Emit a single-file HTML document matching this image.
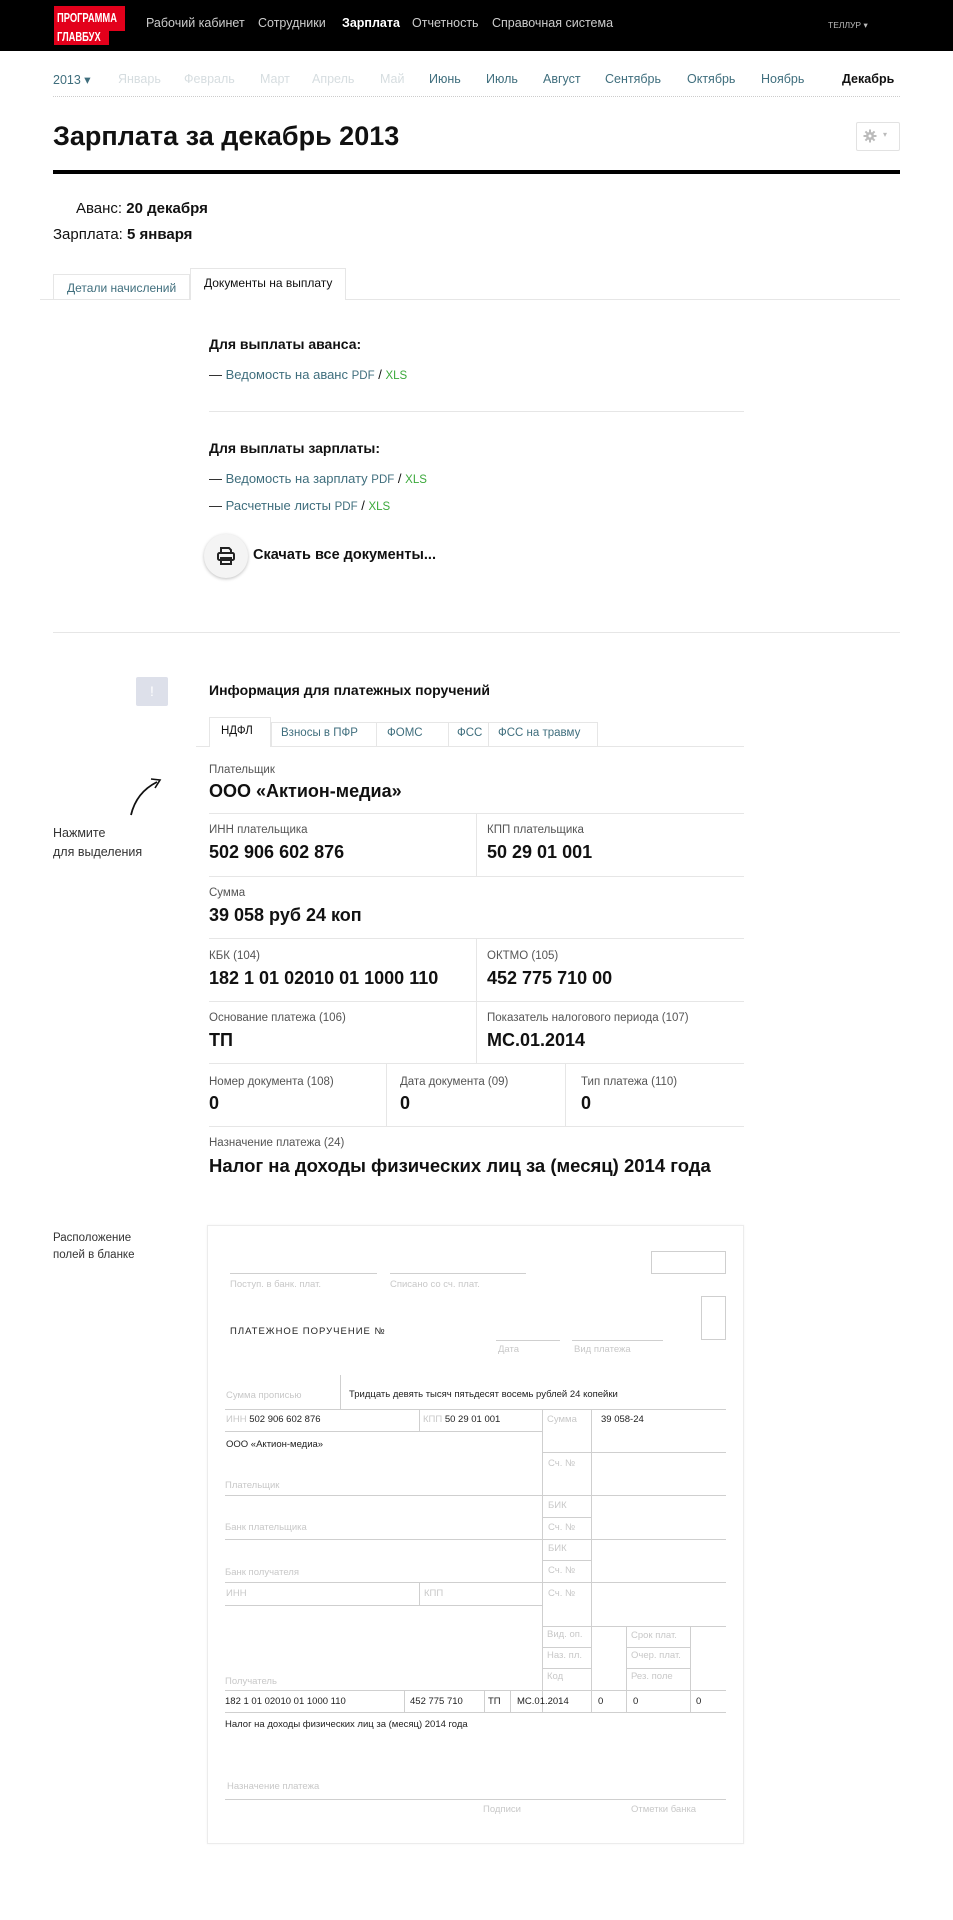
<!DOCTYPE html>
<html><head><meta charset="utf-8">
<style>
*{margin:0;padding:0;box-sizing:border-box}
body{width:953px;height:1920px;background:#fff;position:relative;font-family:"Liberation Sans","Noto Sans CJK SC",sans-serif;color:#111;overflow:hidden}
.a{position:absolute;white-space:nowrap}
.hd{position:absolute;left:0;top:0;width:953px;height:51px;background:#000}
.nav{color:#ccc;font-size:12.5px;top:16px}
.mo{font-size:12.5px;top:72px;color:#3f6e7d}
.mo.l{color:#d6dde0}
.hl{position:absolute;background:#e6e6e6;height:1px}
.vl{position:absolute;background:#e6e6e6;width:1px}
.lb{font-size:11.5px;color:#555}
.vv{font-size:18px;font-weight:bold;color:#111}
.lk{font-size:13px;color:#3f6e7d}
.x{color:#3aa83a}
.g{font-size:9.5px;color:#c8c8c8}
.f{font-size:9.5px;color:#222}
.fl{position:absolute;background:#cfcfcf;height:1px}
.fv{position:absolute;background:#cfcfcf;width:1px}
</style></head><body>
<div class="hd"></div>
<div class="a" style="left:54px;top:6px;width:71px;height:25px;background:#e3001b"></div>
<div class="a" style="left:54px;top:30px;width:55px;height:15px;background:#e3001b"></div>
<div class="a" style="left:57px;top:9px;color:#fff;font-size:12px;font-weight:bold;line-height:17px;transform:scale(0.78,1.1);transform-origin:left top">ПРОГРАММА<br>ГЛАВБУХ</div>
<div class="a nav" style="left:146px">Рабочий кабинет</div>
<div class="a nav" style="left:258px">Сотрудники</div>
<div class="a nav" style="left:342px;color:#fff;font-weight:bold">Зарплата</div>
<div class="a nav" style="left:412px">Отчетность</div>
<div class="a nav" style="left:492px">Справочная система</div>
<div class="a" style="left:828px;top:20px;color:#bbb;font-size:8.5px">ТЕЛЛУР ▾</div>

<div class="a mo" style="left:53px">2013 ▾</div>
<div class="a mo l" style="left:118px">Январь</div>
<div class="a mo l" style="left:184px">Февраль</div>
<div class="a mo l" style="left:260px">Март</div>
<div class="a mo l" style="left:312px">Апрель</div>
<div class="a mo l" style="left:380px">Май</div>
<div class="a mo" style="left:429px">Июнь</div>
<div class="a mo" style="left:486px">Июль</div>
<div class="a mo" style="left:543px">Август</div>
<div class="a mo" style="left:605px">Сентябрь</div>
<div class="a mo" style="left:687px">Октябрь</div>
<div class="a mo" style="left:761px">Ноябрь</div>
<div class="a mo" style="left:842px;color:#111;font-weight:bold">Декабрь</div>
<div class="a" style="left:53px;top:96px;width:847px;border-top:1px dotted #ccc"></div>

<div class="a" style="left:53px;top:121px;font-size:27px;font-weight:bold">Зарплата за декабрь 2013</div>
<div class="a" style="left:856px;top:122px;width:44px;height:29px;border:1px solid #e2e2e2;border-radius:2px"></div>
<svg class="a" style="left:863px;top:129px" width="14" height="14" viewBox="0 0 14 14"><g fill="#bbb"><circle cx="7" cy="7" r="4"/><rect x="6" y="0.5" width="2" height="13"/><rect x="0.5" y="6" width="13" height="2"/><rect x="6" y="0.5" width="2" height="13" transform="rotate(45 7 7)"/><rect x="6" y="0.5" width="2" height="13" transform="rotate(-45 7 7)"/></g><circle cx="7" cy="7" r="1.5" fill="#fff"/></svg>
<div class="a" style="left:883px;top:130px;color:#bbb;font-size:8px">▾</div>
<div class="a" style="left:53px;top:170px;width:847px;height:4px;background:#000"></div>

<div class="a" style="left:76px;top:200px;font-size:15px">Аванс: <b>20 декабря</b></div>
<div class="a" style="left:53px;top:226px;font-size:15px">Зарплата: <b>5 января</b></div>

<div class="a" style="left:53px;top:274px;width:137px;height:26px;border:1px solid #e6e6e6;border-bottom:none"></div>
<div class="a" style="left:67px;top:281px;font-size:12px;color:#3f6e7d">Детали начислений</div>
<div class="a" style="left:190px;top:268px;width:156px;height:32px;border:1px solid #e6e6e6;border-bottom:none;background:#fff"></div>
<div class="a" style="left:204px;top:276px;font-size:12px">Документы на выплату</div>
<div class="hl" style="left:40px;top:299px;width:150px"></div>
<div class="hl" style="left:346px;top:299px;width:554px"></div>

<div class="a" style="left:209px;top:336px;font-size:14px;font-weight:bold">Для выплаты аванса:</div>
<div class="a lk" style="left:209px;top:367px"><span style="color:#111">— </span>Ведомость на аванс <span style="font-size:11.5px">PDF</span> <span style="color:#111">/</span> <span class="x" style="font-size:11.5px">XLS</span></div>
<div class="hl" style="left:209px;top:411px;width:535px"></div>
<div class="a" style="left:209px;top:440px;font-size:14px;font-weight:bold">Для выплаты зарплаты:</div>
<div class="a lk" style="left:209px;top:471px"><span style="color:#111">— </span>Ведомость на зарплату <span style="font-size:11.5px">PDF</span> <span style="color:#111">/</span> <span class="x" style="font-size:11.5px">XLS</span></div>
<div class="a lk" style="left:209px;top:498px"><span style="color:#111">— </span>Расчетные листы <span style="font-size:11.5px">PDF</span> <span style="color:#111">/</span> <span class="x" style="font-size:11.5px">XLS</span></div>
<div class="a" style="left:204px;top:534px;width:44px;height:44px;border-radius:50%;background:#f4f4f4;box-shadow:0 1px 3px rgba(0,0,0,.25)"></div>
<svg class="a" style="left:216px;top:546px" width="20" height="20" viewBox="0 0 20 20" fill="none" stroke="#222" stroke-width="2"><path d="M5 7V2h8l2 2v3"/><rect x="2" y="7" width="16" height="7" rx="1.5"/><rect x="5" y="12" width="10" height="6"/></svg>
<div class="a" style="left:253px;top:547px;font-size:14.5px;font-weight:bold">Скачать все документы...</div>

<div class="hl" style="left:53px;top:632px;width:847px"></div>

<div class="a" style="left:136px;top:677px;width:32px;height:29px;background:#dde0ea;border-radius:2px;color:#fff;font-size:14px;text-align:center;line-height:29px">!</div>
<div class="a" style="left:209px;top:682px;font-size:14px;font-weight:bold">Информация для платежных поручений</div>
<div class="a" style="left:209px;top:717px;width:62px;height:30px;border:1px solid #e6e6e6;border-bottom:none;background:#fff"></div>
<div class="a" style="left:221px;top:725px;font-size:11.5px">НДФЛ</div>
<div class="a" style="left:271px;top:722px;width:327px;height:24px;border:1px solid #e6e6e6;border-bottom:none"></div>
<div class="vl" style="left:376px;top:722px;height:24px"></div>
<div class="vl" style="left:448px;top:722px;height:24px"></div>
<div class="vl" style="left:488px;top:722px;height:24px"></div>
<div class="a" style="left:281px;top:727px;font-size:11.5px;color:#3f6e7d">Взносы в ПФР</div>
<div class="a" style="left:387px;top:727px;font-size:11.5px;color:#3f6e7d">ФОМС</div>
<div class="a" style="left:457px;top:727px;font-size:11.5px;color:#3f6e7d">ФСС</div>
<div class="a" style="left:498px;top:727px;font-size:11.5px;color:#3f6e7d">ФСС на травму</div>
<div class="hl" style="left:196px;top:746px;width:13px"></div>
<div class="hl" style="left:271px;top:746px;width:473px"></div>

<svg class="a" style="left:125px;top:770px" width="52" height="50" viewBox="0 0 52 50" fill="none" stroke="#111" stroke-width="1.8"><path d="M6 45C10 28 20 18 32 12"/><path d="M26 9L35 10L30 18" stroke-width="1.6"/></svg>
<div class="a" style="left:53px;top:824px;font-size:12.5px;line-height:19px;color:#333">Нажмите<br>для выделения</div>

<div class="a lb" style="left:209px;top:764px">Плательщик</div>
<div class="a vv" style="left:209px;top:781px">ООО «Актион-медиа»</div>
<div class="hl" style="left:209px;top:813px;width:535px"></div>
<div class="a lb" style="left:209px;top:824px">ИНН плательщика</div>
<div class="a vv" style="left:209px;top:842px">502 906 602 876</div>
<div class="a lb" style="left:487px;top:824px">КПП плательщика</div>
<div class="a vv" style="left:487px;top:842px">50 29 01 001</div>
<div class="vl" style="left:476px;top:813px;height:63px"></div>
<div class="hl" style="left:209px;top:876px;width:535px"></div>
<div class="a lb" style="left:209px;top:887px">Сумма</div>
<div class="a vv" style="left:209px;top:905px">39 058 руб 24 коп</div>
<div class="hl" style="left:209px;top:938px;width:535px"></div>
<div class="a lb" style="left:209px;top:950px">КБК (104)</div>
<div class="a vv" style="left:209px;top:968px">182 1 01 02010 01 1000 110</div>
<div class="a lb" style="left:487px;top:950px">ОКТМО (105)</div>
<div class="a vv" style="left:487px;top:968px">452 775 710 00</div>
<div class="vl" style="left:476px;top:938px;height:125px"></div>
<div class="hl" style="left:209px;top:1001px;width:535px"></div>
<div class="a lb" style="left:209px;top:1012px">Основание платежа (106)</div>
<div class="a vv" style="left:209px;top:1030px">ТП</div>
<div class="a lb" style="left:487px;top:1012px">Показатель налогового периода (107)</div>
<div class="a vv" style="left:487px;top:1030px">МС.01.2014</div>
<div class="hl" style="left:209px;top:1063px;width:535px"></div>
<div class="a lb" style="left:209px;top:1076px">Номер документа (108)</div>
<div class="a vv" style="left:209px;top:1093px">0</div>
<div class="a lb" style="left:400px;top:1076px">Дата документа (09)</div>
<div class="a vv" style="left:400px;top:1093px">0</div>
<div class="a lb" style="left:581px;top:1076px">Тип платежа (110)</div>
<div class="a vv" style="left:581px;top:1093px">0</div>
<div class="vl" style="left:386px;top:1063px;height:63px"></div>
<div class="vl" style="left:565px;top:1063px;height:63px"></div>
<div class="hl" style="left:209px;top:1126px;width:535px"></div>
<div class="a lb" style="left:209px;top:1137px">Назначение платежа (24)</div>
<div class="a" style="left:209px;top:1155px;font-size:18.5px;font-weight:bold">Налог на доходы физических лиц за (месяц) 2014 года</div>

<div class="a" style="left:53px;top:1230px;font-size:11.5px;line-height:17px;color:#333">Расположение<br>полей в бланке</div>

<div class="a" style="left:207px;top:1225px;width:537px;height:619px;border:1px solid #ececec;box-shadow:0 0 2px rgba(0,0,0,.05)"></div>
<div class="a" style="left:651px;top:1251px;width:75px;height:23px;border:1px solid #cfcfcf"></div>
<div class="fl" style="left:230px;top:1273px;width:147px"></div>
<div class="fl" style="left:390px;top:1273px;width:136px"></div>
<div class="a g" style="left:230px;top:1279px">Поступ. в банк. плат.</div>
<div class="a g" style="left:390px;top:1279px">Списано со сч. плат.</div>
<div class="a" style="left:701px;top:1296px;width:25px;height:44px;border:1px solid #cfcfcf"></div>
<div class="a" style="left:230px;top:1326px;font-size:9.5px;letter-spacing:1px;color:#222">ПЛАТЕЖНОЕ ПОРУЧЕНИЕ №</div>
<div class="fl" style="left:496px;top:1340px;width:64px"></div>
<div class="fl" style="left:572px;top:1340px;width:91px"></div>
<div class="a g" style="left:498px;top:1344px">Дата</div>
<div class="a g" style="left:574px;top:1344px">Вид платежа</div>
<div class="fv" style="left:340px;top:1375px;height:34px"></div>
<div class="a g" style="left:226px;top:1390px">Сумма прописью</div>
<div class="a f" style="left:349px;top:1389px">Тридцать девять тысяч пятьдесят восемь рублей 24 копейки</div>
<div class="fl" style="left:225px;top:1409px;width:501px"></div>
<div class="a f" style="left:226px;top:1414px"><span style="color:#c8c8c8">ИНН</span> 502 906 602 876</div>
<div class="a f" style="left:423px;top:1414px"><span style="color:#c8c8c8">КПП</span> 50 29 01 001</div>
<div class="a g" style="left:547px;top:1414px">Сумма</div>
<div class="a f" style="left:601px;top:1414px">39 058-24</div>
<div class="fv" style="left:419px;top:1409px;height:22px"></div>
<div class="fv" style="left:542px;top:1409px;height:303px"></div>
<div class="fv" style="left:591px;top:1409px;height:303px"></div>
<div class="fl" style="left:225px;top:1431px;width:317px"></div>
<div class="a f" style="left:226px;top:1439px">ООО «Актион-медиа»</div>
<div class="fl" style="left:542px;top:1452px;width:184px"></div>
<div class="a g" style="left:548px;top:1458px">Сч. №</div>
<div class="a g" style="left:225px;top:1480px">Плательщик</div>
<div class="fl" style="left:225px;top:1495px;width:501px"></div>
<div class="a g" style="left:548px;top:1500px">БИК</div>
<div class="fl" style="left:542px;top:1517px;width:49px"></div>
<div class="a g" style="left:548px;top:1522px">Сч. №</div>
<div class="a g" style="left:225px;top:1522px">Банк плательщика</div>
<div class="fl" style="left:225px;top:1539px;width:501px"></div>
<div class="a g" style="left:548px;top:1543px">БИК</div>
<div class="fl" style="left:542px;top:1560px;width:49px"></div>
<div class="a g" style="left:548px;top:1565px">Сч. №</div>
<div class="a g" style="left:225px;top:1567px">Банк получателя</div>
<div class="fl" style="left:225px;top:1582px;width:501px"></div>
<div class="a g" style="left:226px;top:1588px">ИНН</div>
<div class="a g" style="left:424px;top:1588px">КПП</div>
<div class="a g" style="left:548px;top:1588px">Сч. №</div>
<div class="fv" style="left:419px;top:1582px;height:23px"></div>
<div class="fl" style="left:225px;top:1605px;width:317px"></div>
<div class="fl" style="left:542px;top:1626px;width:184px"></div>
<div class="fv" style="left:626px;top:1626px;height:86px"></div>
<div class="fv" style="left:690px;top:1626px;height:86px"></div>
<div class="a g" style="left:547px;top:1629px">Вид. оп.</div>
<div class="a g" style="left:631px;top:1630px">Срок плат.</div>
<div class="fl" style="left:542px;top:1647px;width:49px"></div>
<div class="fl" style="left:626px;top:1647px;width:64px"></div>
<div class="a g" style="left:547px;top:1650px">Наз. пл.</div>
<div class="a g" style="left:631px;top:1650px">Очер. плат.</div>
<div class="fl" style="left:542px;top:1668px;width:49px"></div>
<div class="fl" style="left:626px;top:1668px;width:64px"></div>
<div class="a g" style="left:547px;top:1671px">Код</div>
<div class="a g" style="left:631px;top:1671px">Рез. поле</div>
<div class="a g" style="left:225px;top:1676px">Получатель</div>
<div class="fl" style="left:225px;top:1690px;width:501px"></div>
<div class="fv" style="left:404px;top:1690px;height:22px"></div>
<div class="fv" style="left:484px;top:1690px;height:22px"></div>
<div class="fv" style="left:510px;top:1690px;height:22px"></div>
<div class="a f" style="left:225px;top:1696px">182 1 01 02010 01 1000 110</div>
<div class="a f" style="left:410px;top:1696px">452 775 710</div>
<div class="a f" style="left:488px;top:1696px">ТП</div>
<div class="a f" style="left:517px;top:1696px">МС.01.2014</div>
<div class="a f" style="left:598px;top:1696px">0</div>
<div class="a f" style="left:633px;top:1696px">0</div>
<div class="a f" style="left:696px;top:1696px">0</div>
<div class="fl" style="left:225px;top:1712px;width:501px"></div>
<div class="a f" style="left:225px;top:1719px">Налог на доходы физических лиц за (месяц) 2014 года</div>
<div class="a g" style="left:227px;top:1781px">Назначение платежа</div>
<div class="fl" style="left:225px;top:1799px;width:501px"></div>
<div class="a g" style="left:483px;top:1804px">Подписи</div>
<div class="a g" style="left:631px;top:1804px">Отметки банка</div>
</body></html>
